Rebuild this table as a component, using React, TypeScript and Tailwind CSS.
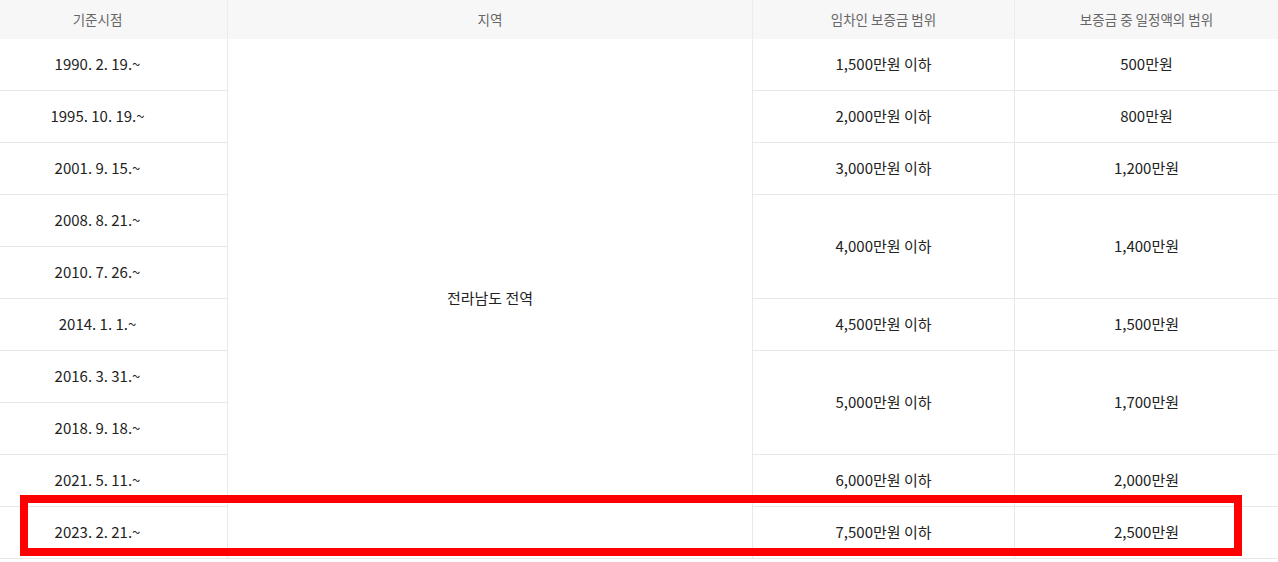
import React from 'react';

type Row = {
  date: string;
  deposit?: string;
  amount?: string;
  span?: number;
};

const rows: Row[] = [
  { date: '1990. 2. 19.~', deposit: '1,500만원 이하', amount: '500만원', span: 1 },
  { date: '1995. 10. 19.~', deposit: '2,000만원 이하', amount: '800만원', span: 1 },
  { date: '2001. 9. 15.~', deposit: '3,000만원 이하', amount: '1,200만원', span: 1 },
  { date: '2008. 8. 21.~', deposit: '4,000만원 이하', amount: '1,400만원', span: 2 },
  { date: '2010. 7. 26.~' },
  { date: '2014. 1. 1.~', deposit: '4,500만원 이하', amount: '1,500만원', span: 1 },
  { date: '2016. 3. 31.~', deposit: '5,000만원 이하', amount: '1,700만원', span: 2 },
  { date: '2018. 9. 18.~' },
  { date: '2021. 5. 11.~', deposit: '6,000만원 이하', amount: '2,000만원', span: 1 },
  { date: '2023. 2. 21.~', deposit: '7,500만원 이하', amount: '2,500만원', span: 1 },
];

const cell = 'h-[52px] border-b border-[#e8e8e8] text-center align-middle';
const head = 'h-[39px] font-normal';

export default function App() {
  return (
    <div className="relative w-[1278px] bg-white font-['Noto_Sans_CJK_KR',sans-serif] text-[15px] text-[#222]">
      <table className="w-full table-fixed border-separate border-spacing-0">
        <colgroup>
          <col className="w-[228px]" />
          <col className="w-[525px]" />
          <col className="w-[262px]" />
          <col className="w-[263px]" />
        </colgroup>
        <thead>
          <tr className="bg-[#f7f7f7] text-[13.5px] text-[#666]">
            <th className={`${head} border-r border-[#ececec] pr-[32px]`}>기준시점</th>
            <th className={`${head} border-r border-[#ececec]`}>지역</th>
            <th className={`${head} border-r border-[#ececec]`}>임차인 보증금 범위</th>
            <th className={head}>보증금 중 일정액의 범위</th>
          </tr>
        </thead>
        <tbody>
          {rows.map((row, i) => (
            <tr key={i}>
              <td className={`${cell} border-r pr-[32px]`}>{row.date}</td>
              {i === 0 && (
                <td rowSpan={rows.length} className={`${cell} border-r`}>
                  전라남도 전역
                </td>
              )}
              {row.deposit && (
                <>
                  <td rowSpan={row.span} className={`${cell} border-r`}>
                    {row.deposit}
                  </td>
                  <td rowSpan={row.span} className={cell}>
                    {row.amount}
                  </td>
                </>
              )}
            </tr>
          ))}
        </tbody>
      </table>

      {/* highlight box */}
      <div className="pointer-events-none absolute left-[20px] top-[495px] h-[61px] w-[1222px] border-[8px] border-[#ff0000]" />
    </div>
  );
}
